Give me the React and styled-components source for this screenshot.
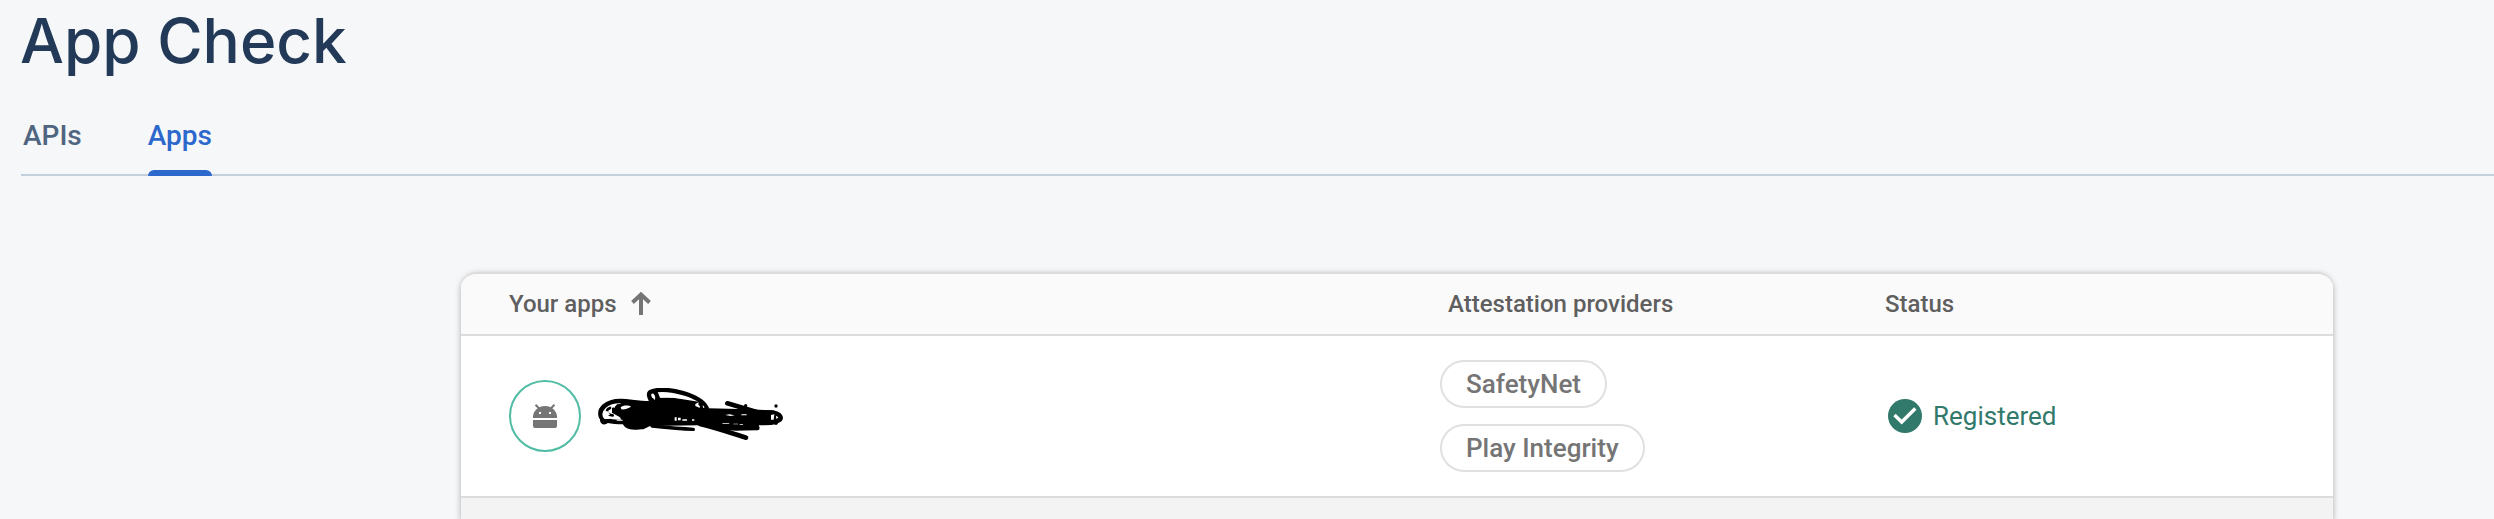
import React from 'react';
import styled, { createGlobalStyle } from 'styled-components';

const GlobalStyle = createGlobalStyle`
  *, *::before, *::after { box-sizing: border-box; }
  body { margin: 0; background: #f5f7f9; font-family: Roboto, "Liberation Sans", sans-serif; }
  button { font: inherit; color: inherit; background: none; border: 0; padding: 0; cursor: pointer; }
`;

const Page = styled.main`
  display: flex;
  flex-direction: column;
  min-height: 100vh;
  padding-left: 20px;
  overflow: hidden;
`;

const Title = styled.h1`
  margin: 0;
  font: 500 62px/82px Inter, "Open Sans", sans-serif;
  color: #223a58;
`;

const Tabs = styled.div`
  display: flex;
  gap: 66px;
  height: 94px;
  align-items: flex-end;
  margin-left: 1px;
  padding-left: 2px;
  border-bottom: 2px solid #c3cfdd;
`;

const Tab = styled.button`
  && { font-size: 28px; font-weight: 500; line-height: 32px; }
  padding: 0 0 24px;
  margin-bottom: -2px;
  color: ${(p) => (p.$active ? '#2d68cd' : '#506580')};
  position: relative;
  &::after {
    content: '';
    display: ${(p) => (p.$active ? 'block' : 'none')};
    position: absolute;
    left: 0;
    right: 0;
    bottom: 0;
    height: 6px;
    border-radius: 6px 6px 0 0;
    background: #2d68cd;
  }
`;

const Card = styled.section`
  flex: 1;
  margin: 96px 161px 0 441px;
  background: #f3f3f3;
  border-top: 2px solid #dcdcdc;
  border-radius: 16px 16px 0 0;
  box-shadow: 0 2px 6px rgba(0, 0, 0, 0.3);
  overflow: hidden;
`;

const Table = styled.table`
  width: 100%;
  table-layout: fixed;
  border-collapse: separate;
  border-spacing: 0;
  text-align: left;
`;

const Col = styled.col`
  width: ${(p) => p.$width || 'auto'};
`;

const HeadCell = styled.th`
  height: 62px;
  padding: 0 0 0 ${(p) => (p.$first ? 48 : 16)}px;
  background: #fafafa;
  border-bottom: 2px solid #dcdcdc;
  color: #5f5f5f;
  font-size: 24px;
  font-weight: 500;
  line-height: 28px;
`;

const SortButton = styled.button`
  display: flex;
  align-items: center;
  gap: 14px;
`;

const Cell = styled.td`
  height: 162px;
  padding: 0 0 0 ${(p) => p.$inset}px;
  background: #fff;
  border-bottom: 2px solid #dcdcdc;
  font-size: 26px;
  line-height: 32px;
`;

const AppIdentity = styled.div`
  display: flex;
  align-items: center;
  gap: 16px;
`;

const Avatar = styled.span`
  display: flex;
  align-items: center;
  justify-content: center;
  width: 72px;
  height: 72px;
  border: 2px solid #4fbca3;
  border-radius: 50%;
`;

const ChipList = styled.ul`
  display: flex;
  flex-direction: column;
  align-items: flex-start;
  gap: 16px;
  margin: 0;
  padding: 0;
  list-style: none;
`;

const Chip = styled.li`
  padding: 6px 24px;
  border: 2px solid #e0e0e0;
  border-radius: 24px;
  color: #757575;
  font-weight: 500;
`;

const Status = styled.div`
  display: flex;
  align-items: center;
  gap: 11px;
  color: #31796b;
`;

const ArrowUp = () => (
  <svg width="20" height="24" viewBox="0 0 20 24" aria-hidden="true">
    <path d="M10 23V3M1.500 10.500 10 2.500l8.500 8" fill="none" stroke="#757575" strokeWidth="4" />
  </svg>
);

const AndroidIcon = () => (
  <svg width="24" height="24" viewBox="0 0 24 24" fill="#757575" overflow="visible" aria-label="Android">
    <path d="M0 14v-1a12 11 0 0 1 24 0v1z" />
    <path d="M0 16h24v6a2 2 0 0 1-2 2H2a2 2 0 0 1-2-2z" />
    <path d="m2.500.700 3.500 3.500M21.500.700 18 4.200" stroke="#757575" strokeWidth="2" />
    <path d="M6 8h2v2H6zM16 8h2v2h-2z" fill="#fff" />
  </svg>
);

const CheckIcon = () => (
  <svg width="34" height="34" viewBox="0 0 34 34" aria-hidden="true">
    <circle cx="17" cy="17" r="17" fill="#31796b" />
    <path d="m6.500 16 7.200 7L27.300 9.500" fill="none" stroke="#fff" strokeWidth="3.400" />
  </svg>
);

const Redaction = () => (
  <svg width="188" height="56" viewBox="21 24 564 168" role="img" aria-label="App name hidden">
    <path d="M100 66 175 64 182 54 250 53 330 66 355 85 415 86 480 88 555 92 562 132 507 134 505 150 440 152 400 150 330 136 180 138 160 148 120 148 100 132 90 112 66 98 66 84Z" />
    <g fill="none" stroke="#000" strokeLinecap="round" strokeLinejoin="round">
      <path d="M100 126C70 126 42 122 34 112 24 88 48 62 94 63 120 64 140 70 180 71" strokeWidth="14" />
      <path d="M36 112c-6 14 4 20 12 16l10-6M60 84c-16 6-10 20 8 22M84 76c-12 10-2 22 12 16" strokeWidth="8" />
      <path d="M186 66C176 50 172 38 186 34 230 20 330 44 350 84M196 38c6 8 6 20 14 26" strokeWidth="13" />
      <path d="M104 132c8 16 56 16 70 0M186 138c40 4 80 8 124 10" strokeWidth="10" />
      <path d="M412 70 500 96 550 98c28 6 28 22 6 27-20 6-36 2-60 4" strokeWidth="14" />
      <path d="M330 132c50 12 90 26 138 41M400 142l102 2" strokeWidth="14" />
    </g>
    <g fill="#fff">
      <path d="M92 82c8-7 24-6 31-2-8 5-20 9-29 8zM226 38c24 1 46 8 62 17-18 1-36-1-54-3zM188 42c7 1 8 12 7 18-6-3-9-12-7-18z" />
      <path d="M38 98c4-6 12-6 17-3l5 9-8 3 8 10H44c-6-5-8-12-6-19zM80 119h18v3H80zM70 77c6-4 8-3 5 3-2 7-5 5-5-3z" />
      <path d="m316 72 10-5-1 7 7 6-4 3-12-5zM338 75l6 7-5 2zM254 112h6v10h-6zM264 113h8v8h-8zM277 118h14v4h-14zM306 118h7v4h-7z" />
      <path d="M406 105l12-2 16 3-12 2zM454 103h16v3h-16zM396 129h20l3 2h-20zM430 131h14v2h-14zM449 132h10v2h-10zM543 105l10-2-2 16h-8z" />
    </g>
    <g>
      <circle cx="558" cy="78" r="5" />
      <circle cx="467" cy="77" r="5" />
      <circle cx="558" cy="130" r="5" />
      <circle cx="333" cy="78" r="4" />
    </g>
  </svg>
);

export default function App() {
  return (
    <>
      <GlobalStyle />
      <Page>
        <Title>App Check</Title>
        <Tabs role="tablist">
          <Tab role="tab" aria-selected="false">APIs</Tab>
          <Tab role="tab" aria-selected="true" $active>Apps</Tab>
        </Tabs>
        <Card>
          <Table>
            <colgroup>
              <Col />
              <Col $width="437px" />
              <Col $width="464px" />
            </colgroup>
            <thead>
              <tr>
                <HeadCell scope="col" $first aria-sort="ascending">
                  <SortButton>Your apps<ArrowUp /></SortButton>
                </HeadCell>
                <HeadCell scope="col">Attestation providers</HeadCell>
                <HeadCell scope="col">Status</HeadCell>
              </tr>
            </thead>
            <tbody>
              <tr>
                <Cell $inset={48}>
                  <AppIdentity>
                    <Avatar><AndroidIcon /></Avatar>
                    <Redaction />
                  </AppIdentity>
                </Cell>
                <Cell $inset={8}>
                  <ChipList>
                    <Chip>SafetyNet</Chip>
                    <Chip>Play Integrity</Chip>
                  </ChipList>
                </Cell>
                <Cell $inset={19}>
                  <Status><CheckIcon />Registered</Status>
                </Cell>
              </tr>
            </tbody>
          </Table>
        </Card>
      </Page>
    </>
  );
}
